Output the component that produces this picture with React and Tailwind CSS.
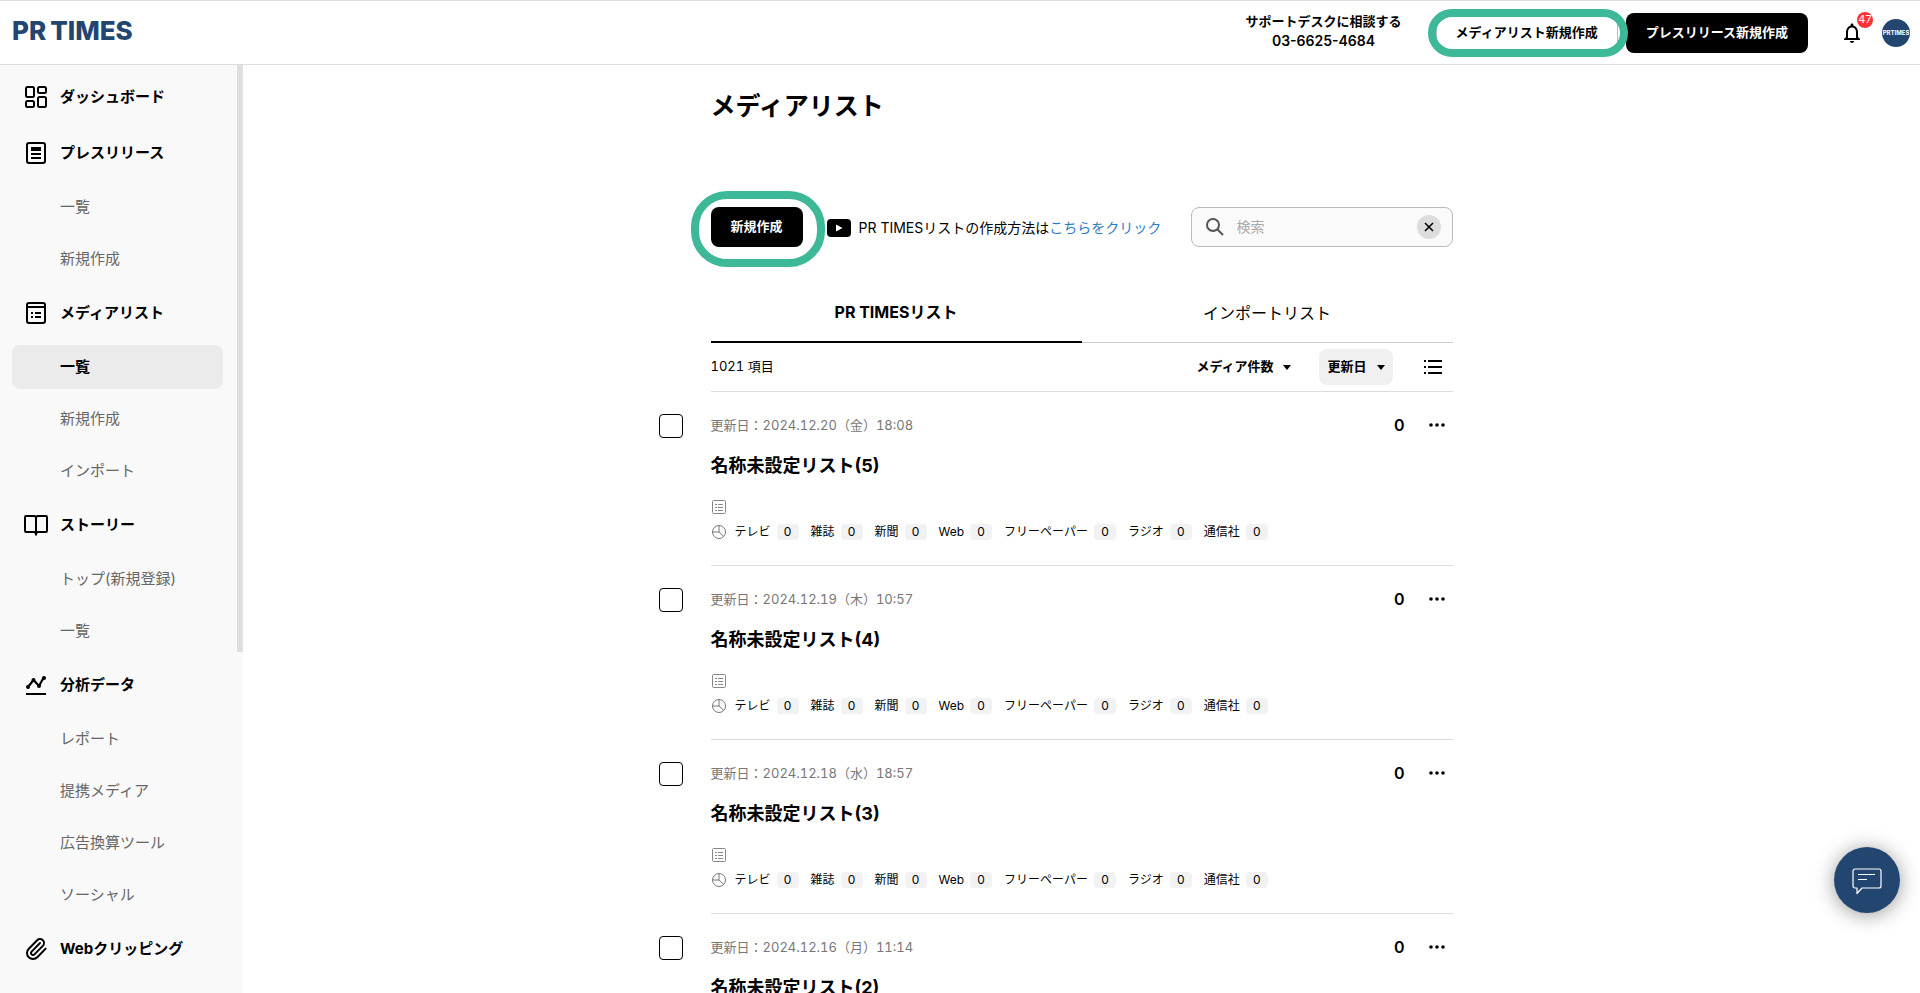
import React from "react";
import { MdNotificationsNone } from "react-icons/md";
import { Paperclip } from "lucide-react";

/* ---------------------------------------------
   Icons
---------------------------------------------- */
const DashboardIcon = () => (
  <svg width="24" height="24" viewBox="0 0 24 24" fill="none" stroke="currentColor" strokeWidth="2">
    <rect x="2" y="2" width="8" height="10" rx="1.500" />
    <rect x="14" y="2" width="8" height="6" rx="1.500" />
    <rect x="2" y="16" width="8" height="6" rx="1.500" />
    <rect x="14" y="12" width="8" height="10" rx="1.500" />
  </svg>
);

const ReleaseIcon = () => (
  <svg width="24" height="24" viewBox="0 0 24 24" fill="none" stroke="currentColor" strokeWidth="2">
    <rect x="3" y="2" width="18" height="20" rx="2" />
    <path d="M7 8h10" strokeWidth="4" />
    <path d="M7 13h10M7 17h10" />
  </svg>
);

const MediaListIcon = () => (
  <svg width="24" height="24" viewBox="0 0 24 24" fill="none" stroke="currentColor" strokeWidth="2">
    <rect x="3" y="2" width="18" height="20" rx="2" />
    <path d="M3 6h18M7 12h2M11 12h6M7 16h2M11 16h6" />
  </svg>
);

const StoryIcon = () => (
  <svg
    width="24"
    height="24"
    viewBox="0 0 24 24"
    fill="none"
    stroke="currentColor"
    strokeWidth="2"
    strokeLinejoin="round"
    strokeLinecap="round"
  >
    <path d="M12 5c0-1-1-2-2-2H2c-.6 0-1 .4-1 1v14c0 .6.4 1 1 1h8c1 0 2 1 2 2.500V5Z" />
    <path d="M12 5c0-1 1-2 2-2h8c.6 0 1 .4 1 1v14c0 .6-.4 1-1 1h-8c-1 0-2 1-2 2.500V5Z" />
  </svg>
);

const AnalysisIcon = () => (
  <svg width="24" height="24" viewBox="0 0 24 24" fill="none" stroke="currentColor" strokeWidth="2">
    <path d="M4 14l5.500-7L15 13l5-9" strokeWidth="2.200" />
    <g fill="currentColor" stroke="none">
      <circle cx="4" cy="14" r="2" />
      <circle cx="9.500" cy="7" r="2" />
      <circle cx="15" cy="13" r="2" />
      <circle cx="20" cy="5" r="2" />
    </g>
    <path d="M2 21h20" />
  </svg>
);

const ClipIcon = () => <Paperclip size={24} strokeWidth={2} />;

const CaretIcon = () => (
  <svg width="8" height="5" viewBox="0 0 8 5" fill="currentColor">
    <path d="M0 0h8L4 5z" />
  </svg>
);

const YoutubeIcon = () => (
  <svg width="24" height="18" viewBox="0 0 24 18">
    <rect width="24" height="18" rx="4" fill="#000" />
    <path d="M9 5.500v7l6.500-3.500z" fill="#fff" />
  </svg>
);

const SearchIcon = () => (
  <svg width="20" height="20" viewBox="0 0 20 20" fill="none" stroke="#555" strokeWidth="2">
    <circle cx="8" cy="8" r="6" />
    <path d="M12.500 12.500L18 18" />
  </svg>
);

const ListViewIcon = () => (
  <svg width="24" height="24" viewBox="0 0 24 24" fill="none" stroke="currentColor" strokeWidth="2">
    <path d="M3 6h2M7 6h14M3 12h2M7 12h14M3 18h2M7 18h14" />
  </svg>
);

const MemoIcon = () => (
  <svg width="16" height="16" viewBox="0 0 16 16" fill="none" stroke="#888">
    <rect x="1.500" y="1.500" width="13" height="13" rx="1" />
    <path d="M4 5.500h2M7 5.500h5M4 8.500h2M7 8.500h5M4 11.500h2M7 11.500h5" />
  </svg>
);

const PieIcon = () => (
  <svg width="16" height="16" viewBox="0 0 16 16" fill="none" stroke="#777">
    <circle cx="8" cy="8" r="6.500" />
    <path d="M8 1.500V8L12.800 12.500M8 8L1.500 8" />
  </svg>
);

const DotsIcon = () => (
  <svg width="24" height="24" viewBox="0 0 24 24" fill="currentColor">
    <circle cx="6" cy="12" r="1.800" />
    <circle cx="12" cy="12" r="1.800" />
    <circle cx="18" cy="12" r="1.800" />
  </svg>
);

const ChatIcon = () => (
  <svg width="30" height="28" viewBox="0 0 30 28" fill="none" stroke="#fff" strokeWidth="1.200" strokeLinejoin="round">
    <path d="M3 1h24a2 2 0 0 1 2 2v15a2 2 0 0 1-2 2H10l-5 5.500V20H3a2 2 0 0 1-2-2V3a2 2 0 0 1 2-2Z" />
    <path d="M6 6.500h17M6 11.500h9" />
  </svg>
);

/* ---------------------------------------------
   Data
---------------------------------------------- */
const menu = [
  { label: "ダッシュボード", Icon: DashboardIcon, items: [] },
  {
    label: "プレスリリース",
    Icon: ReleaseIcon,
    items: [{ label: "一覧" }, { label: "新規作成" }],
  },
  {
    label: "メディアリスト",
    Icon: MediaListIcon,
    items: [{ label: "一覧", active: true }, { label: "新規作成" }, { label: "インポート" }],
  },
  {
    label: "ストーリー",
    Icon: StoryIcon,
    items: [{ label: "トップ(新規登録)" }, { label: "一覧" }],
  },
  {
    label: "分析データ",
    Icon: AnalysisIcon,
    items: [
      { label: "レポート" },
      { label: "提携メディア" },
      { label: "広告換算ツール" },
      { label: "ソーシャル" },
    ],
  },
  { label: "Webクリッピング", Icon: ClipIcon, items: [] },
];

const lists = [
  { id: 5, name: "名称未設定リスト(5)", date: "2024.12.20（金）18:08", count: 0 },
  { id: 4, name: "名称未設定リスト(4)", date: "2024.12.19（木）10:57", count: 0 },
  { id: 3, name: "名称未設定リスト(3)", date: "2024.12.18（水）18:57", count: 0 },
  { id: 2, name: "名称未設定リスト(2)", date: "2024.12.16（月）11:14", count: 0 },
];

const mediaTypes = ["テレビ", "雑誌", "新聞", "Web", "フリーペーパー", "ラジオ", "通信社"];

/* ---------------------------------------------
   Header
---------------------------------------------- */
const Header = () => (
  <header className="flex h-[65px] shrink-0 items-center justify-between border-y border-[#ddd] bg-white pl-3 pr-[10px]">
    <a
      href="#"
      aria-label="PR TIMES"
      className="flex gap-1 pb-1 font-['Inter'] text-[26px] font-extrabold leading-8 text-[#234670]"
    >
      <span>PR</span>
      <span>TIMES</span>
    </a>
    <div className="flex items-center">
      <div className="mr-[34px] pb-1 text-center text-[13px] font-bold leading-5">
        <p>サポートデスクに相談する</p>
        <p className="text-sm leading-5 font-semibold">03-6625-4684</p>
      </div>
      <div className="relative mr-2">
        <button className="h-10 rounded-lg border border-[#bbb] bg-white px-[19px] text-[13px] font-bold">
          メディアリスト新規作成
        </button>
        <span className="pointer-events-none absolute -inset-y-1 -left-2 -right-[10px] z-10 rounded-full border-8 border-[#3db899]" />
      </div>
      <button className="mr-8 h-10 rounded-lg bg-black px-5 text-[13px] font-bold text-white">
        プレスリリース新規作成
      </button>
      <button aria-label="お知らせ" className="relative mr-[18px]">
        <MdNotificationsNone size={24} />
        <span className="absolute -right-[9px] -top-[9px] flex size-4 items-center justify-center rounded-full bg-[#ff3333] text-[11px] leading-none text-white">
          47
        </span>
      </button>
      <a
        href="#"
        className="flex size-7 items-center justify-center rounded-full bg-[#234670] font-['Inter'] text-[6px] font-bold text-white"
      >
        PRTIMES
      </a>
    </div>
  </header>
);

/* ---------------------------------------------
   Sidebar
---------------------------------------------- */
const Sidebar = () => (
  <aside className="flex w-[243px] shrink-0 bg-[#f9f9f9]">
    <nav className="flex flex-1 flex-col gap-2 overflow-y-auto py-2 pl-3 pr-[14px] text-[15px] [scrollbar-width:none]">
      {menu.map(({ label, Icon, items }) => (
        <React.Fragment key={label}>
          <a href="#" className="flex h-12 shrink-0 items-center gap-3 pl-3 font-bold">
            <Icon />
            {label}
          </a>
          {items.map((item) => (
            <a
              key={item.label}
              href="#"
              className={
                item.active
                  ? "flex h-11 shrink-0 items-center rounded-lg bg-[#ebebeb] pl-12 font-bold"
                  : "flex h-11 shrink-0 items-center rounded-lg pl-12 text-[#666]"
              }
            >
              {item.label}
            </a>
          ))}
        </React.Fragment>
      ))}
    </nav>
    {/* scroll thumb */}
    <div className="w-[6px]">
      <div className="h-[587px] bg-[#dfdfdf]" />
    </div>
  </aside>
);

/* ---------------------------------------------
   List row
---------------------------------------------- */
const ListRow = ({ item }) => (
  <li className="relative border-b border-[#ddd] py-[23px]">
    <input
      type="checkbox"
      aria-label={item.name}
      className="absolute -left-[52px] top-[22px] size-6 appearance-none rounded border border-black bg-white"
    />
    <div className="flex h-5 items-center">
      <p className="flex-1 text-[13px] leading-5 text-[#777] tabular-nums">更新日：{item.date}</p>
      <span className="text-base font-semibold leading-5">{item.count}</span>
      <button aria-label="メニュー" className="ml-5 mr-1">
        <DotsIcon />
      </button>
    </div>
    <h2 className="mt-[17px] text-lg font-bold leading-7">{item.name}</h2>
    <div className="mt-[19px] flex h-4 items-center">
      <MemoIcon />
    </div>
    <div className="mt-[7px] flex h-5 items-center text-xs">
      <PieIcon />
      <ul className="ml-2 flex items-center gap-3">
        {mediaTypes.map((type) => (
          <li key={type} className="flex items-center gap-[6px]">
            {type}
            <span className="flex h-4 w-[22px] items-center justify-center rounded bg-[#f2f2f2]">0</span>
          </li>
        ))}
      </ul>
    </div>
  </li>
);

const App = () => {
  return (
    <div className="flex h-screen flex-col overflow-hidden bg-white font-['Inter','Noto_Sans_CJK_JP',sans-serif] text-black">
      <Header />
      <div className="flex min-h-0 flex-1">
        <Sidebar />
        <main className="min-w-0 flex-1 overflow-y-auto [scrollbar-width:none]">
          <div className="mx-auto max-w-[742px] pt-[21px]">
            <h1 className="text-[25px] font-bold leading-10">メディアリスト</h1>

            <div className="mt-[81px] flex h-10 items-center">
              <div className="relative mr-6">
                <button className="h-10 rounded-lg bg-black px-5 text-[13px] font-bold text-white">
                  新規作成
                </button>
                <span className="pointer-events-none absolute -bottom-5 -left-5 -right-[22px] -top-4 rounded-[36px] border-8 border-[#3db899]" />
              </div>
              <div className="flex items-center gap-2 pt-[2px]">
                <YoutubeIcon />
                <p className="text-sm">
                  PR TIMESリストの作成方法は
                  <a href="#" className="text-[#2a7cc7]">
                    こちらをクリック
                  </a>
                </p>
              </div>
              <div className="ml-auto flex h-10 w-[262px] items-center rounded-lg border border-[#bbb] bg-[#fafafa] pl-[13px] pr-[11px]">
                <SearchIcon />
                <input
                  type="text"
                  aria-label="検索"
                  placeholder="検索"
                  className="ml-3 min-w-0 flex-1 bg-transparent text-sm outline-none placeholder:text-[#aaa]"
                />
                <button aria-label="クリア" className="flex size-6 items-center justify-center rounded-full bg-[#ddd]">
                  <svg width="10" height="10" viewBox="0 0 10 10" stroke="#000" strokeWidth="1.600">
                    <path d="M1 1l8 8M9 1L1 9" />
                  </svg>
                </button>
              </div>
            </div>

            <div role="tablist" className="mt-9 flex h-[60px] border-b border-[#ccc] text-base">
              <button role="tab" aria-selected="true" className="-mb-px flex-1 border-b-2 border-black font-bold">
                PR TIMESリスト
              </button>
              <button role="tab" aria-selected="false" className="flex-1">
                インポートリスト
              </button>
            </div>

            <div className="flex h-[49px] items-center border-b border-[#ddd] text-[13px]">
              <p className="flex-1 tabular-nums">1021 項目</p>
              <button className="mr-5 flex h-9 items-center gap-[10px] px-2 font-bold">
                メディア件数
                <CaretIcon />
              </button>
              <button className="mr-7 flex h-9 items-center gap-[10px] rounded-lg bg-[#f0f0f0] px-2 font-bold">
                更新日
                <CaretIcon />
              </button>
              <button aria-label="表示切替" className="mr-2">
                <ListViewIcon />
              </button>
            </div>

            <ul>
              {lists.map((item) => (
                <ListRow key={item.id} item={item} />
              ))}
            </ul>
          </div>
        </main>
      </div>

      <button
        aria-label="チャット"
        className="fixed bottom-20 right-5 flex size-[66px] items-center justify-center rounded-full bg-[#234670] pt-1 shadow-[0_2px_20px_rgba(0,0,0,0.4)]"
      >
        <ChatIcon />
      </button>
    </div>
  );
};

export default App;
